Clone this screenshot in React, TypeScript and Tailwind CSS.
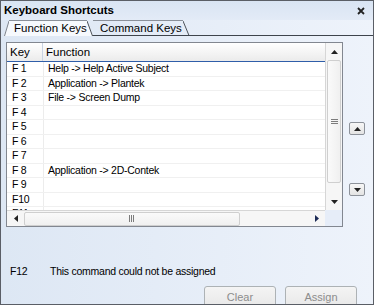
import React from "react";

const rows: [string, string][] = [
  ["F 1", "Help -> Help Active Subject"],
  ["F 2", "Application -> Plantek"],
  ["F 3", "File -> Screen Dump"],
  ["F 4", ""],
  ["F 5", ""],
  ["F 6", ""],
  ["F 7", ""],
  ["F 8", "Application -> 2D-Contek"],
  ["F 9", ""],
  ["F10", ""],
  ["F11", ""],
];

const Tri = ({ dir }: { dir: "up" | "down" | "left" | "right" }) => {
  const pts = {
    up: "0,4 3.5,0 7,4",
    down: "0,0 7,0 3.5,4",
    left: "4,0 4,7 0,3.5",
    right: "0,0 0,7 4,3.5",
  }[dir];
  const vertical = dir === "up" || dir === "down";
  return (
    <svg width={vertical ? 7 : 4} height={vertical ? 4 : 7} viewBox={vertical ? "0 0 7 4" : "0 0 4 7"}>
      <polygon points={pts} fill={dir === "right" ? "#1c2a55" : "#222"} />
    </svg>
  );
};

const App = () => {
  return (
    <div className="w-[374px] h-[305px] overflow-hidden border border-[#5a5e66] bg-gradient-to-r from-[#dde7f4] to-[#eef3fb] flex flex-col font-['Liberation_Sans',Arial,sans-serif] text-black">
      {/* Title */}
      <div className="h-[19px] shrink-0 flex items-center justify-between pl-[3px] pr-[8px] pt-[1px] bg-gradient-to-b from-[#d9e4f3] to-[#e3ebf7]">
        <span className="text-[11.5px] font-bold leading-none">Keyboard Shortcuts</span>
        <svg width="8" height="8" viewBox="0 0 8 8">
          <path d="M1 1 L7 7 M7 1 L1 7" stroke="#222" strokeWidth="1.8" />
        </svg>
      </div>

      {/* Tabs */}
      <div className="flex h-[16px] shrink-0 items-stretch pl-[3px]">
        <svg width="5" height="16" viewBox="0 0 5 16" className="shrink-0">
          <polygon points="0,16 5,1 5,16" fill="#f6f9fd" />
          <line x1="0.5" y1="16" x2="5" y2="1" stroke="#7d838c" strokeWidth="1" />
        </svg>
        <div className="w-[78px] shrink-0 border-t border-[#8a9099] bg-[#f6f9fd] pl-[5px] text-[11.5px] leading-[15px]">
          Function Keys
        </div>
        <svg width="6" height="16" viewBox="0 0 6 16" className="shrink-0">
          <polygon points="0,1 6,16 0,16" fill="#f6f9fd" />
          <line x1="0" y1="1" x2="5.5" y2="16" stroke="#4c5259" strokeWidth="1" />
          <line x1="5.5" y1="15.5" x2="6" y2="15.5" stroke="#3e444c" strokeWidth="1" />
        </svg>
        <div className="w-[90px] shrink-0 border-t border-b border-t-[#8a9099] border-b-[#3e444c] pl-[7px] text-[11.5px] leading-[14px]">
          Command Keys
        </div>
        <svg width="7" height="16" viewBox="0 0 7 16" className="shrink-0">
          <line x1="0" y1="1" x2="6" y2="15.5" stroke="#4c5259" strokeWidth="1" />
          <line x1="0" y1="15.5" x2="7" y2="15.5" stroke="#3e444c" strokeWidth="1" />
        </svg>
        <div className="flex-1 border-b border-[#3e444c]" />
      </div>

      {/* Body */}
      <div className="flex shrink-0 pt-[6px] pl-[5px]">
        <div className="w-[337px] h-[185px] shrink-0 border border-[#828790] bg-white grid grid-cols-[1fr_17px] grid-rows-[1fr_16px] overflow-hidden">
          {/* List */}
          <div className="overflow-hidden">
            <div className="h-[19px] flex border-b border-[#2f5ea9] bg-gradient-to-b from-white to-[#ebebeb] text-[11.5px]">
              <div className="w-[36px] shrink-0 border-r border-[#c9d3e2] pl-[3px] leading-[18px]">Key</div>
              <div className="pl-[3px] leading-[18px]">Function</div>
            </div>
            {rows.map(([k, f]) => (
              <div key={k} className="h-[14.5px] flex border-b border-[#f0f0f0] text-[10.5px] tracking-[-0.25px] leading-[13px]">
                <div className="w-[37px] shrink-0 border-r border-[#ececec] pl-[5px]">{k}</div>
                <div className="pl-[4px] whitespace-nowrap">{f}</div>
              </div>
            ))}
          </div>

          {/* Vertical scrollbar */}
          <div className="flex flex-col bg-[#f6f6f6] border-l border-[#d6d6d6]">
            <div className="h-[17px] flex items-center justify-center">
              <Tri dir="up" />
            </div>
            <div className="h-[123px] mx-[1px] border border-[#cfcfcf] rounded-[2px] bg-gradient-to-r from-[#fafafa] to-[#f0f0f0] flex items-center justify-center">
              <svg width="7" height="6" viewBox="0 0 7 6">
                <path d="M0 0.5 H7 M0 2.5 H7 M0 4.5 H7" stroke="#7c7c7c" strokeWidth="1" />
              </svg>
            </div>
            <div className="flex-1" />
            <div className="h-[17px] flex items-center justify-center">
              <Tri dir="down" />
            </div>
          </div>

          {/* Horizontal scrollbar */}
          <div className="flex items-center bg-[#f6f6f6] border-t border-[#d6d6d6]">
            <div className="w-[17px] flex items-center justify-center">
              <Tri dir="left" />
            </div>
            <div className="w-[216px] h-[14px] border border-[#cfcfcf] rounded-[2px] bg-gradient-to-b from-[#fafafa] to-[#f0f0f0] flex items-center justify-center">
              <svg width="6" height="7" viewBox="0 0 6 7">
                <path d="M0.5 0 V7 M2.5 0 V7 M4.5 0 V7" stroke="#7c7c7c" strokeWidth="1" />
              </svg>
            </div>
            <div className="flex-1" />
            <div className="w-[17px] flex items-center justify-center">
              <Tri dir="right" />
            </div>
          </div>
          <div className="bg-[#e6edf8]" />
        </div>

        {/* Move buttons */}
        <div className="flex flex-col pl-[6px] pt-[80px]">
          <div className="w-[16px] h-[13px] border border-[#8d929a] rounded-[2px] bg-gradient-to-b from-[#f7f7f7] to-[#e4e4e4] flex items-center justify-center">
            <Tri dir="up" />
          </div>
          <div className="w-[16px] h-[13px] mt-[48px] border border-[#8d929a] rounded-[2px] bg-gradient-to-b from-[#f7f7f7] to-[#e4e4e4] flex items-center justify-center">
            <Tri dir="down" />
          </div>
        </div>
      </div>

      {/* Status */}
      <div className="flex shrink-0 mt-[38px] h-[13px] items-center text-[10.5px] tracking-[-0.25px]">
        <span className="w-[49px] pl-[9px]">F12</span>
        <span>This command could not be assigned</span>
      </div>

      {/* Buttons */}
      <div className="flex shrink-0 justify-end gap-[9px] pr-[16px] mt-[8px]">
        <button className="w-[72px] h-[22px] border border-[#adb2b5] rounded-[3px] bg-gradient-to-b from-[#f4f4f4] to-[#e8e8e8] text-[11px] text-[#8c8c8c] leading-none">
          Clear
        </button>
        <button className="w-[72px] h-[22px] border border-[#adb2b5] rounded-[3px] bg-gradient-to-b from-[#f4f4f4] to-[#e8e8e8] text-[11px] text-[#8c8c8c] leading-none">
          Assign
        </button>
      </div>
    </div>
  );
};

export default App;
